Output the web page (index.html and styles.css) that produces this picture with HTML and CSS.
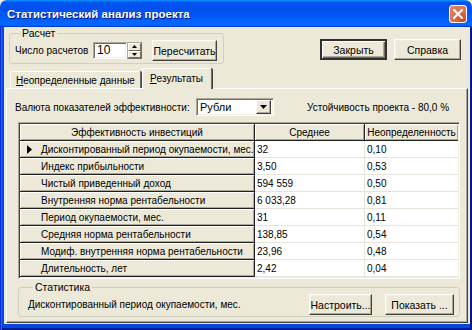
FILE: index.html
```html
<!DOCTYPE html>
<html lang="ru">
<head>
<meta charset="utf-8">
<title>Статистический анализ проекта</title>
<link rel="stylesheet" href="styles.css">
</head>
<body>
<div class="window">
  <div class="titlebar">
    <span class="title">Статистический анализ проекта</span>
    <span class="close"><svg width="10" height="10" viewBox="0 0 10 10"><path d="M1 1L9 9M9 1L1 9" stroke="#fff" stroke-width="2" stroke-linecap="square"/></svg></span>
  </div>
  <div class="frame">
    <div class="client">
      <div class="toprow">
        <fieldset class="group calc">
          <legend>Расчет</legend>
          <span class="label">Число расчетов</span>
          <span class="edit">10</span>
          <span class="spin">
            <span class="spinbtn"><svg width="5" height="3" viewBox="0 0 5 3"><path d="M2.5 0L5 3H0z" fill="#000"/></svg></span>
            <span class="spinbtn"><svg width="5" height="3" viewBox="0 0 5 3"><path d="M0 0H5L2.5 3z" fill="#000"/></svg></span>
          </span>
          <span class="btn recalc">Пересчитать</span>
        </fieldset>
        <div class="mainbtns">
          <span class="btn default">Закрыть</span>
          <span class="btn">Справка</span>
        </div>
      </div>
      <div class="tabs">
        <span class="tab"><u>Н</u>еопределенные данные</span>
        <span class="tab active"><u>Р</u>езультаты</span>
      </div>
      <div class="panel">
        <div class="currow">
          <span class="curlabel">Валюта показателей эффективности:</span>
          <span class="combo"><span class="comboval">Рубли</span><span class="dropbtn"><svg width="7" height="4" viewBox="0 0 7 4"><path d="M0 0H7L3.5 4z" fill="#000"/></svg></span></span>
          <span class="stab">Устойчивость проекта - 80,0 %</span>
        </div>
        <div class="grid">
          <div class="fx hd">Эффективность инвестиций</div>
          <div class="fx hd">Среднее</div>
          <div class="fx hd last">Неопределенность</div>

          <div class="fx rh"><svg class="ind" width="5" height="9" viewBox="0 0 5 9"><path d="M0 0L5 4.5L0 9z" fill="#000"/></svg>Дисконтированный период окупаемости, мес.</div>
          <div class="dc">32</div><div class="dc last">0,10</div>

          <div class="fx rh">Индекс прибыльности</div>
          <div class="dc">3,50</div><div class="dc last">0,53</div>

          <div class="fx rh">Чистый приведенный доход</div>
          <div class="dc">594 559</div><div class="dc last">0,50</div>

          <div class="fx rh">Внутренняя норма рентабельности</div>
          <div class="dc">6 033,28</div><div class="dc last">0,81</div>

          <div class="fx rh">Период окупаемости, мес.</div>
          <div class="dc">31</div><div class="dc last">0,11</div>

          <div class="fx rh">Средняя норма рентабельности</div>
          <div class="dc">138,85</div><div class="dc last">0,54</div>

          <div class="fx rh">Модиф. внутренняя норма рентабельности</div>
          <div class="dc">23,96</div><div class="dc last">0,48</div>

          <div class="fx rh">Длительность, лет</div>
          <div class="dc">2,42</div><div class="dc last">0,04</div>
        </div>
        <fieldset class="group stats">
          <legend>Статистика</legend>
          <span class="stattext">Дисконтированный период окупаемости, мес.</span>
          <span class="btn setup">Настроить...</span>
          <span class="btn show">Показать ...</span>
        </fieldset>
      </div>
    </div>
  </div>
</div>
</body>
</html>
```

FILE: styles.css
```css
* { box-sizing: border-box; }
html, body { margin: 0; padding: 0; }
body {
  width: 472px;
  height: 330px;
  overflow: hidden;
  font-family: "Liberation Sans", Arial, sans-serif;
  font-size: 10px;
  color: #000;
  background: #ECE9D8;
  white-space: nowrap;
}
.window {
  width: 472px;
  height: 330px;
  display: flex;
  flex-direction: column;
}
.titlebar {
  height: 27px;
  flex: none;
  display: flex;
  align-items: center;
  justify-content: space-between;
  padding: 0 5px 0 7px;
  background: linear-gradient(to bottom, #0997FF 0%, #0053EE 9%, #0050EE 40%, #0066FF 86%, #0066FF 92%, #005BFF 95%, #003DD7 97%, #003DD7 100%);
  border-radius: 7px 7px 0 0;
}
.title {
  color: #fff;
  font-weight: bold;
  font-size: 11.5px;
  text-shadow: 1px 1px #0F1089;
}
.close {
  width: 18px;
  height: 18px;
  margin-top: 1px;
  border: 1px solid #fff;
  border-radius: 3px;
  background: radial-gradient(circle at 80% 85%, #CC4624 0%, #DC6F51 45%, #E4876A 100%);
  display: flex;
  align-items: center;
  justify-content: center;
}
.frame {
  flex: 1;
  display: flex;
  padding: 0 4px 6px 4px;
  background: #0A46D9;
  box-shadow: inset 1px 0 #0831D9, inset 2px 0 #166AEE, inset -1px 0 #00138C, inset -2px 0 #001EA0, inset 0 -1px #00138C, inset 0 -2px #001EA0;
}
.client {
  flex: 1;
  display: flex;
  flex-direction: column;
  background: #ECE9D8;
  padding: 0 2px 1px 2px;
}
.toprow {
  display: flex;
  justify-content: space-between;
  align-items: flex-start;
  padding: 0 7px 0 3px;
}
.group {
  margin: 0;
  border: 1px solid #D0D0BF;
  border-radius: 3px;
  min-width: 0;
}
.group legend {
  padding: 0 2px;
  margin-left: 5px;
  line-height: 13px;
  color: #000;
  font-size: 10.5px;
}
.calc {
  width: 215px;
  height: 37px;
  display: flex;
  align-items: center;
  padding: 0 5px 2px 5px;
}
.label { width: 78px; }
.edit {
  width: 34px;
  height: 17px;
  background: #fff;
  border: 1px solid;
  border-color: #ACA899 #fff #fff #ACA899;
  box-shadow: inset 1px 1px #716F64, inset -1px -1px #F1EFE2;
  padding: 1px 0 0 3px;
  font-size: 12px;
  line-height: 13px;
}
.spin {
  width: 15px;
  height: 17px;
  display: flex;
  flex-direction: column;
  border: 1px solid #716F64;
  border-top-color: #ACA899;
  border-left-color: #ACA899;
  background: #fff;
  margin-right: 10px;
}
.spinbtn {
  flex: 1;
  display: flex;
  align-items: center;
  justify-content: center;
  background: #ECE9D8;
  border: 1px solid;
  border-color: #fff #716F64 #716F64 #fff;
}
.btn {
  display: inline-flex;
  align-items: center;
  justify-content: center;
  height: 21px;
  background: #ECE9D8;
  border: 1px solid;
  border-color: #fff #404040 #404040 #fff;
  box-shadow: inset -1px -1px #ACA899, inset 1px 1px #F1EFE2;
  font-size: 10.5px;
}
.recalc { width: 65px; }
.mainbtns {
  display: flex;
  gap: 7px;
  margin-top: 12px;
}
.mainbtns .btn { width: 67px; }
.btn.default {
  border: 2px solid;
  border-color: #303030;
  box-shadow: inset 1px 1px #fff, inset -1px -1px #716F64, inset -2px -2px #ACA899;
}
.tabs {
  display: flex;
  align-items: flex-end;
  height: 24px;
  padding-left: 4px;
  position: relative;
  z-index: 1;
}
.tab {
  height: 17px;
  padding: 0 5px 0 5px;
  display: flex;
  align-items: center;
  background: #ECE9D8;
  border-top: 1px solid #fff;
  border-left: 1px solid #fff;
  border-right: 1px solid #716F64;
  box-shadow: 1px 0 #404040;
  border-radius: 2px 2px 0 0;
  margin-right: 2px;
}
.tab.active {
  height: 21px;
  margin: 0 0 -1px -1px;
  padding: 0 8px 1px 7px;
}
.panel {
  flex: 1;
  display: flex;
  flex-direction: column;
  border: 1px solid;
  border-color: #fff #404040 #404040 #fff;
  box-shadow: inset -1px -1px #ACA899;
  padding: 9px 7px 0 8px;
}
.currow {
  display: flex;
  align-items: center;
  height: 18px;
}
.curlabel { width: 181px; }
.combo {
  width: 78px;
  height: 18px;
  display: flex;
  align-items: center;
  justify-content: space-between;
  background: #fff;
  border: 1px solid;
  border-color: #ACA899 #fff #fff #ACA899;
  box-shadow: inset 1px 1px #716F64, inset -1px -1px #F1EFE2;
  padding: 2px 2px 2px 3px;
}
.comboval { font-size: 11px; }
.dropbtn {
  width: 15px;
  height: 14px;
  display: flex;
  align-items: center;
  justify-content: center;
  background: #ECE9D8;
  border: 1px solid;
  border-color: #fff #404040 #404040 #fff;
  box-shadow: inset -1px -1px #ACA899;
}
.stab { margin-left: 33px; }
.grid {
  margin: 6px 0 0 3px;
  width: 442px;
  display: grid;
  grid-template-columns: 235px 110px 93px;
  grid-auto-rows: 17px;
  border: 1px solid;
  border-color: #ACA899 #fff #fff #ACA899;
  box-shadow: inset 1px 1px #404040, inset -1px -1px #F1EFE2;
  padding: 1px;
  background: #fff;
}
.fx {
  background: #ECE9D8;
  border-right: 1px solid #202020;
  border-bottom: 1px solid #202020;
  box-shadow: inset 1px 1px #fff, inset -1px -1px #ACA899;
  display: flex;
  align-items: center;
  overflow: hidden;
}
.hd { justify-content: center; }
.hd.last { border-right: none; }
.rh { padding-left: 21px; position: relative; }
.ind { position: absolute; left: 7px; top: 4px; }
.dc {
  background: #fff;
  border-right: 1px solid #E6E4DA;
  border-bottom: 1px solid #E6E4DA;
  padding-left: 2px;
  display: flex;
  align-items: center;
}
.dc.last { border-right: none; }
.stats {
  margin: 2px 0 0 3px;
  width: 442px;
  height: 36px;
  display: flex;
  align-items: center;
  padding: 0 5px 2px 9px;
}
.stattext { flex: 1; }
.setup { width: 63px; margin-right: 13px; }
.show { width: 69px; }
```
